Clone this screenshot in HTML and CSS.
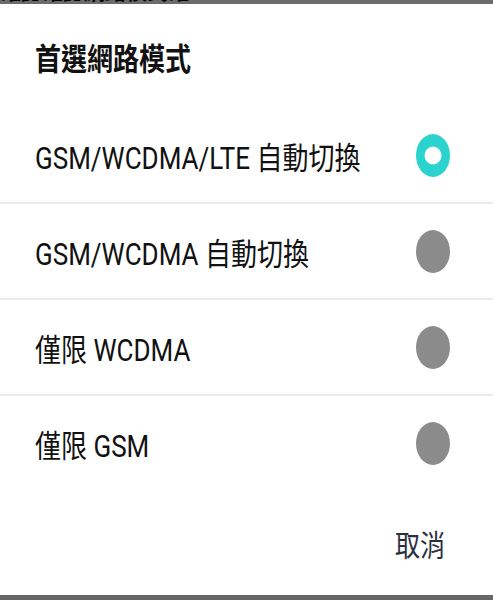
FILE: index.html
```html
<!DOCTYPE html>
<html lang="zh-Hant">
<head>
    <meta charset="UTF-8">
    <title>首選網路模式</title>
    <link rel="stylesheet" href="styles.css">
</head>
<body>
    <div class="top-bar"><span class="top-text">確認確認網路模式確認</span></div>

    <div class="dialog">
        <h1 class="title"><span class="tall">首選網路模式</span></h1>

        <div class="options">
            <div class="option">
                <span class="label tall">GSM/WCDMA/LTE 自動切換</span>
                <svg class="radio" viewBox="0 0 34 43" width="34" height="43">
                    <ellipse cx="17" cy="21.5" rx="17" ry="21.5" fill="#2bd3cf"/>
                    <ellipse cx="17" cy="21.5" rx="8.5" ry="9" fill="#fff"/>
                </svg>
            </div>
            <div class="option">
                <span class="label tall">GSM/WCDMA 自動切換</span>
                <svg class="radio" viewBox="0 0 34 43" width="34" height="43">
                    <ellipse cx="17" cy="21.5" rx="17" ry="21.5" fill="#8b8b8b"/>
                </svg>
            </div>
            <div class="option">
                <span class="label tall">僅限 WCDMA</span>
                <svg class="radio" viewBox="0 0 34 43" width="34" height="43">
                    <ellipse cx="17" cy="21.5" rx="17" ry="21.5" fill="#8b8b8b"/>
                </svg>
            </div>
            <div class="option">
                <span class="label tall">僅限 GSM</span>
                <svg class="radio" viewBox="0 0 34 43" width="34" height="43">
                    <ellipse cx="17" cy="21.5" rx="17" ry="21.5" fill="#8b8b8b"/>
                </svg>
            </div>
        </div>

        <div class="actions">
            <button type="button" class="cancel"><span class="tall">取消</span></button>
        </div>
    </div>

    <div class="bottom-bar"></div>
</body>
</html>
```

FILE: styles.css
```css
html, body {
    margin: 0;
    padding: 0;
    background: #fff;
}
body {
    width: 493px;
    height: 600px;
    display: flex;
    flex-direction: column;
    font-family: Roboto, "Noto Sans CJK TC", sans-serif;
    color: #111;
    overflow: hidden;
}
.top-bar {
    height: 4px;
    background: #6b6b6b;
    overflow: hidden;
    flex: none;
}
.top-text {
    display: block;
    width: 190px;
    font-size: 21px;
    line-height: 24px;
    margin-top: -20px;
    font-weight: bold;
    color: #000;
    white-space: nowrap;
    overflow: hidden;
}
.dialog {
    flex: 1;
    display: flex;
    flex-direction: column;
}
/* the screenshot is squeezed sideways, so text is stretched a little in height */
.tall {
    display: inline-block;
    transform: scaleY(1.18);
}
.title {
    margin: 0;
    height: 104px;
    padding-left: 35px;
    display: flex;
    align-items: center;
    font-size: 26px;
    font-weight: bold;
}
.option {
    height: 94px;
    display: flex;
    align-items: center;
    justify-content: space-between;
    padding: 0 43px 0 35px;
}
.option + .option {
    border-top: 2px solid #ececec;
}
.label {
    font-size: 26px;
}
.radio {
    display: block;
}
.actions {
    flex: 1;
    display: flex;
    justify-content: flex-end;
    align-items: center;
    padding-right: 48px;
}
.cancel {
    border: none;
    background: none;
    padding: 0;
    font-family: inherit;
    font-size: 25px;
    color: #2b2f3f;
}
.bottom-bar {
    height: 5px;
    background: #666;
    flex: none;
}
```
